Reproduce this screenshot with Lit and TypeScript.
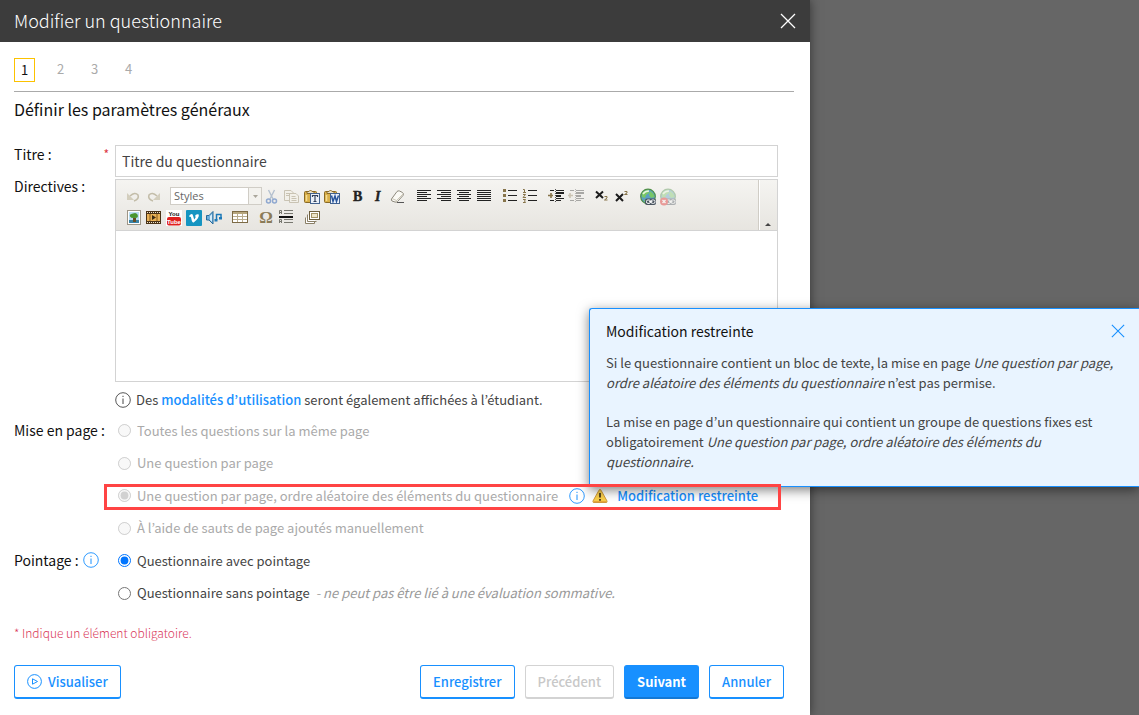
import { LitElement, html, svg, css, type TemplateResult } from "lit";
import { customElement, property, state } from "lit/decorators.js";

const lines = (rows: number[][], color = "#222") =>
  rows.map(([x, y, w, h = 1]) => svg`<rect x=${x} y=${y} width=${w} height=${h} fill=${color}></rect>`);

const globe = svg`
  <circle cx="8" cy="7.5" r="7.3" fill="#5c9fc4" stroke="#4f8f45" stroke-width="1.2"></circle>
  <path d="M2 4 Q5 0.5 8 1 L9 4 6 6 5 9 2 8Z M10 2 Q14 4 14.5 8 L11 9 9 6Z M4 11 L8 10 9 14 Q6 14 4 12Z" fill="#79c766"></path>
  <path d="M3 5 Q5 2 9 2" stroke="#e6f6df" stroke-width="1.4" fill="none"></path>`;

const chain = svg`
  <rect x="5" y="9.5" width="11" height="6.5" rx="2" fill="#4a5560"></rect>
  <rect x="6.5" y="11" width="4" height="3.4" rx="1.4" fill="none" stroke="#fff"></rect>
  <rect x="11" y="11" width="4" height="3.4" rx="1.4" fill="none" stroke="#fff"></rect>
  <path d="M9 12.7H12.5" stroke="#fff"></path>`;

const clipboard = svg`
  <rect x="0.5" y="2.5" width="12" height="11" rx="1" fill="#d9b04a" stroke="#8a6a25"></rect>
  <path d="M3 4.5V2.5H5Q6.500 -0.5 8 2.500H10V4.5Z" fill="#e8e0c8" stroke="#8a6a25"></path>
  <path d="M2.500 6V12" stroke="#f4dc94" stroke-width="1.500"></path>`;

const icons: Record<string, TemplateResult> = {
  undo: svg`<path d="M4 7Q9 2.500 12 6Q13.500 10 8 12" fill="none" stroke="#c3bda9" stroke-width="1.600"></path><path d="M1 4V11H8Z" fill="#d3cebd"></path>`,
  redo: svg`<path d="M11 7Q6 2.500 3 6Q1.500 10 7 12" fill="none" stroke="#c3bda9" stroke-width="1.600"></path><path d="M14 4V11H7Z" fill="#d3cebd"></path>`,
  cut: svg`<path d="M4.500 1L9 10M10.500 1L6 10" stroke="#b5c1cf" stroke-width="1.400"></path><circle cx="4.500" cy="12" r="2" fill="none" stroke="#8fa8d0" stroke-width="1.500"></circle><circle cx="10.500" cy="12" r="2" fill="none" stroke="#8fa8d0" stroke-width="1.500"></circle>`,
  copy: svg`<g fill="#f2f0e9" stroke="#c9c3b3"><path d="M0.500 1.500H7L9.500 4V11.500H0.500Z"></path><path d="M5.500 4.500H12L14.500 7V13.500H5.500Z"></path><path d="M2 4.500H6M2 6.500H5M7.500 7.500H11.500M7.500 9.500H12.500M7.500 11.500H12.500"></path></g>`,
  pasteText: svg`${clipboard}<rect x="6.500" y="4.500" width="9" height="10" fill="#eaf1fa" stroke="#42628f"></rect><path d="M8.500 8V6.500H13.500V8M11 6.500V12.500M9.500 12.500H12.500" fill="none" stroke="#34435c" stroke-width="1.200"></path>`,
  pasteWord: svg`${clipboard}<rect x="6.500" y="4.500" width="9" height="10" fill="#eaf1fa" stroke="#42628f"></rect><path d="M7.500 6.500L9 12.500L11 7L12.500 12.500L14.500 6.500" fill="none" stroke="#28559c" stroke-width="1.500"></path>`,
  bold: svg`<text class="serif" x="3" y="12">B</text>`,
  italic: svg`<text class="serif slanted" x="5" y="12">I</text>`,
  eraser: svg`<path d="M1.500 10L7 2.500Q8 1.500 9.500 2L12.500 3.500Q14 4.500 13 6.500L7.500 12.500Q6.500 13.500 5 13L2 12Q1 11 1.500 10Z" fill="#fbfaf5" stroke="#8d897d"></path><path d="M2 9.500L6.500 11.500L13 5M6.500 11.500V13" fill="none" stroke="#cbc6b6"></path><path d="M7 13.500H14" stroke="#555"></path>`,
  left: svg`${lines([[1, 1, 14], [1, 3, 10], [1, 5, 14], [1, 7, 10], [1, 9, 14], [1, 11, 10]])}`,
  right: svg`${lines([[1, 1, 14], [5, 3, 10], [1, 5, 14], [5, 7, 10], [1, 9, 14], [5, 11, 10]])}`,
  center: svg`${lines([[1, 1, 14], [3, 3, 10], [1, 5, 14], [3, 7, 10], [1, 9, 14], [3, 11, 10]])}`,
  justify: svg`${lines([[1, 1, 14], [1, 3, 14], [1, 5, 14], [1, 7, 14], [1, 9, 14], [1, 11, 14]])}`,
  bullets: svg`${lines([[1, 0, 3, 3], [1, 5, 3, 3], [1, 10, 3, 3]], "#87744a")}${lines([[6, 1, 9], [6, 6, 9], [6, 11, 9]])}`,
  numbers: svg`<path d="M1 0.500H2.500V3.500M1 3.500H4M1 5.500H3.500L1 8.500H4M1 10.500H3.500L2.500 12L3.500 13.500H1" fill="none" stroke="#87744a"></path>${lines([[6, 1, 9], [6, 6, 9], [6, 11, 9]])}`,
  indent: svg`${lines([[2, 1, 4], [8, 1, 8], [8, 3, 8, 2], [8, 6, 5, 2], [8, 9, 8], [2, 11, 4], [8, 11, 5]])}<path d="M7.500 0V14" stroke="#555" stroke-dasharray="1 1"></path><path d="M0 6.500H5M3 4V9" stroke="#87744a" stroke-width="1.600"></path>`,
  outdent: svg`<g opacity="0.35">${lines([[2, 1, 4], [8, 1, 8], [8, 3, 8, 2], [8, 6, 5, 2], [8, 9, 8], [2, 11, 4], [8, 11, 5]])}<path d="M7.500 0V14" stroke="#555" stroke-dasharray="1 1"></path><path d="M0 6.500H5M2 4V9" stroke="#87744a" stroke-width="1.600"></path></g>`,
  sub: svg`<path d="M2 2.500L9 9M9 2.500L2 9" stroke="#1c1c1c" stroke-width="2"></path><path d="M10.500 7.500H13V9L10.500 11H13.500" fill="none" stroke="#87744a"></path>`,
  sup: svg`<path d="M2 5L9 12M9 5L2 12" stroke="#1c1c1c" stroke-width="2"></path><path d="M10.500 2.500H13V4L10.500 5.500H13.500" fill="none" stroke="#87744a"></path>`,
  link: svg`${globe}${chain}`,
  unlink: svg`<g opacity="0.4">${globe}${chain}<circle cx="4" cy="12.500" r="4" fill="#e01f1f"></circle><path d="M2.500 11L5.500 14M5.500 11L2.500 14" stroke="#fff" stroke-width="1.300"></path></g>`,
  image: svg`<rect x="1.500" y="0.500" width="13" height="14" fill="#fff" stroke="#9d9686"></rect><rect x="3" y="2" width="10" height="8" fill="#b9ddf3"></rect><rect x="3" y="10" width="10" height="3" fill="#3b83a5"></rect><path d="M7 8V12H10V8Z" fill="#684d25"></path><path d="M4 6.500Q3 4 7 3.500Q10 2 11.500 4.500Q13 8 9 8Q5 8.500 4 6.500Z" fill="#4a9630"></path>`,
  video: svg`<rect x="0" y="1" width="15" height="13" fill="#4a3215"></rect><rect x="1" y="4" width="13" height="7" fill="#e8b155"></rect><path d="M1 2.500H14M1 12.500H14" stroke="#eee3cb" stroke-dasharray="1 1"></path><path d="M4 4V11M11 4V11" stroke="#8a5a1b"></path><path d="M6 5L10 7.500L6 10Z" fill="#3d2a12"></path>`,
  youtube: svg`<rect width="16" height="16" fill="#fff"></rect><rect x="1" y="7" width="14" height="8.500" rx="2" fill="#e02020"></rect><text class="tiny" x="8" y="6" text-anchor="middle">You</text><text class="tiny light" x="8" y="13.500" text-anchor="middle">Tube</text>`,
  vimeo: svg`<rect width="16" height="16" rx="1" fill="#1695c1"></rect><path d="M3 6Q6 2.500 7 5.500L8.200 9.500Q10.500 7 9 6Q10 3.500 12.800 4.500Q13.500 8 7.700 12.500Q6 13 5.300 8.500Q5 6 3.800 7Z" fill="#fff"></path>`,
  audio: svg`<path d="M0.500 5.500H3L7 1.500V14L3 10H0.500Z" fill="#6eaedb" stroke="#276a9a"></path><path d="M4 6V10L6 12V4Z" fill="#d5edfb"></path><path d="M10.500 10V4.500H15V8" fill="none" stroke="#1c79b8" stroke-width="1.500"></path><rect x="8.500" y="9" width="3" height="2.500" fill="#1c79b8"></rect><rect x="13" y="7" width="3" height="2.500" fill="#1c79b8"></rect>`,
  table: svg`<rect x="0.500" y="1.500" width="15" height="11" fill="#fff" stroke="#7d6b45"></rect><rect x="1" y="2" width="14" height="2" fill="#b7a67d"></rect><path d="M1 6.500H15M1 9.500H15M5.500 4V12M10.500 4V12" stroke="#b9ac8d"></path>`,
  omega: svg`<text class="omega" x="8" y="13" text-anchor="middle">Ω</text>`,
  rule: svg`${lines([[6, 0, 9], [6, 3, 9], [6, 9, 9], [6, 12, 9]], "#77776f")}${lines([[1, 6, 14, 2]], "#111")}<path d="M1.500 4V0.500H3.500V4M1.500 2.500H3.500M1.500 13V9.500H3.500V13M1.500 11.500H3.500" stroke="#77776f" fill="none"></path>`,
  frames: svg`<path d="M1.500 7.500V13.500H10.500V11M3.500 4.500V11.500H12.500" fill="#fff" stroke="#8a7f66"></path><rect x="5.500" y="1.500" width="10" height="8" fill="#fff" stroke="#6d5f3e"></rect><rect x="7.500" y="3.500" width="6" height="4" fill="#ece4c8" stroke="#a39264"></rect>`,
};

type Tool = [icon: string, label: string];
const history: Tool[] = [["undo", "Annuler la saisie"], ["redo", "Rétablir la saisie"]];
const firstRow: Tool[][] = [
  [["cut", "Couper"], ["copy", "Copier"], ["pasteText", "Coller comme texte"], ["pasteWord", "Coller depuis Word"]],
  [["bold", "Gras"], ["italic", "Italique"], ["eraser", "Supprimer la mise en forme"]],
  [["left", "Aligner à gauche"], ["right", "Aligner à droite"], ["center", "Centrer"], ["justify", "Justifier"]],
  [["bullets", "Liste à puces"], ["numbers", "Liste numérotée"]],
  [["indent", "Augmenter le retrait"], ["outdent", "Diminuer le retrait"]],
  [["sub", "Indice"], ["sup", "Exposant"]],
  [["link", "Lien"], ["unlink", "Supprimer le lien"]],
];
const secondRow: Tool[][] = [
  [["image", "Image"], ["video", "Vidéo"], ["youtube", "YouTube"], ["vimeo", "Vimeo"], ["audio", "Audio"]],
  [["table", "Tableau"]],
  [["omega", "Caractère spécial"], ["rule", "Ligne horizontale"]],
  [["frames", "Cadre"]],
];

const infoIcon = html`<svg width="16" height="16" viewBox="0 0 16 16" aria-hidden="true">
  <circle cx="8" cy="8" r="7.3" fill="none" stroke="currentColor" stroke-width="0.9"></circle>
  <path d="M8 6.500V12M8 3.800V5" stroke="currentColor"></path>
</svg>`;

@customElement("rich-editor")
export class RichEditor extends LitElement {
  @property() label = "";

  static styles = css`
    :host { display: block; border: 1px solid #d3d3d3; background: #fff; }
    .toolbar { display: flex; border-bottom: 1px solid #d3d3d3; background: linear-gradient(#f5f4f1, #e7e5e0); }
    .rows { flex: 1; padding: 7px 8px 2px; display: flex; flex-direction: column; gap: 1px; }
    .row { display: flex; flex-wrap: wrap; }
    .group { display: flex; margin-right: 6px; }
    button { padding: 2px; border: 0; background: none; display: flex; width: 20px; height: 20px; box-sizing: border-box; }
    svg { display: block; flex: none; overflow: visible; }
    .styles { display: flex; position: relative; width: 92px; height: 18px; }
    select {
      appearance: none; width: 100%; height: 18px; padding: 0 14px 0 3px; border: 1px solid #d0cdc6;
      border-radius: 0; background: #fff; color: #666; font: 11px/16px "Open Sans", sans-serif;
    }
    .arrow {
      position: absolute; right: 1px; top: 1px; bottom: 1px; width: 12px; display: grid; place-items: center;
      background: #f3f2ee; border-left: 1px solid #d0cdc6; pointer-events: none;
    }
    .collapse {
      display: flex; align-items: flex-end; justify-content: center; width: 19px; height: auto;
      padding: 0 0 4px; border-left: 1px solid #d0cdc6; box-shadow: inset 1px 0 #fff;
    }
    textarea { display: block; width: 100%; height: 150px; box-sizing: border-box; border: 0; padding: 8px; resize: none; outline: 0; }
    .serif { font: bold 14px "Liberation Serif", serif; fill: #222; stroke: #222; stroke-width: 0.4; }
    .slanted { font-style: italic; }
    .tiny { font: bold 6px "Liberation Sans", sans-serif; fill: #111; }
    .light { fill: #fff; }
    .omega { font: bold 17px "Liberation Serif", serif; fill: #8b7b57; }
  `;

  private group(tools: Tool[]) {
    return html`<div class="group">${tools.map(([icon, label]) => html`
      <button type="button" aria-label=${label}><svg width="16" height="16" viewBox="0 0 16 16" aria-hidden="true">${icons[icon]}</svg></button>`)}</div>`;
  }

  render() {
    return html`
      <div class="toolbar" role="toolbar">
        <div class="rows">
          <div class="row">
            ${this.group(history)}
            <div class="styles">
              <select aria-label="Styles"><option>Styles</option></select>
              <span class="arrow"><svg width="5" height="3" viewBox="0 0 5 3"><path d="M0 0H5L2.500 3Z" fill="#aaa69b"></path></svg></span>
            </div>
            ${firstRow.map((g) => this.group(g))}
          </div>
          <div class="row">${secondRow.map((g) => this.group(g))}</div>
        </div>
        <button class="collapse" type="button" aria-label="Réduire la barre d’outils">
          <svg width="6" height="3" viewBox="0 0 6 3"><path d="M0 3H6L3 0Z" fill="#444"></path></svg>
        </button>
      </div>
      <textarea aria-label=${this.label}></textarea>
    `;
  }
}

@customElement("app-root")
export class AppRoot extends LitElement {
  @state() private layout = 2;
  @state() private scoring = 0;

  static styles = css`
    :host {
      display: block; position: relative; min-height: 100vh; overflow: hidden; background: #666; color: #444;
      font: 13px/20px "Noto Sans CJK KR", "Noto Sans", sans-serif;
    }
    h1, h2, h3, p { margin: 0; font-weight: 400; }
    button, input { font: inherit; color: inherit; }
    svg { flex: none; display: block; }
    a { color: #1890ff; text-decoration: none; font-weight: 500; }
    .modal {
      box-sizing: border-box; width: 100%; max-width: 810px; min-height: 100vh; background: #fff;
      box-shadow: 0 0 10px rgba(0, 0, 0, 0.5);
    }
    .bar {
      display: flex; align-items: center; justify-content: space-between; height: 42px; padding: 0 14px;
      background: #3c3c3c; color: #fff;
    }
    h1 { font-size: 18px; line-height: 24px; font-weight: 300; padding-bottom: 2px; }
    .icon-button { display: flex; padding: 0; border: 0; background: none; }
    .content { padding: 16px 16px 0 14px; }
    .steps { display: flex; gap: 13px; padding-bottom: 9px; border-bottom: 1px solid #aaa; }
    .steps button {
      box-sizing: border-box; width: 21px; height: 24px; padding: 0 0 2px; border: 1px solid transparent; background: none;
      color: #aaa; line-height: 20px;
    }
    .steps .current { margin-right: 2px; padding: 0; border-color: #fcc200; color: #111; }
    h2 { margin: 5px 0 24px; font-size: 16px; line-height: 24px; color: #111; }
    .form { display: grid; grid-template-columns: 101px 1fr; padding-right: 16px; }
    .label { display: flex; color: #111; font-size: 14px; line-height: 18px; }
    .star { margin: 0 6px 0 auto; font-size: 12px; color: #dc3545; }
    .title { box-sizing: border-box; width: 100%; height: 32px; padding: 0 6px; border: 1px solid #d3d3d3; background: #fff; color: #444; font-size: 14px; }
    rich-editor { margin-top: 2px; }
    .note { display: flex; align-items: center; gap: 5px; margin: 8px 0 4px; }
    .options { display: flex; flex-direction: column; }
    .option { position: relative; display: flex; align-items: center; height: 33px; white-space: nowrap; }
    .option:nth-child(even) { height: 32px; }
    .option label { display: flex; align-items: center; gap: 6px; }
    .option input { width: 13px; height: 13px; margin: 0 0 0 3px; }
    .locked label { color: #aaa; }
    .label.row { align-items: center; gap: 4px; height: 32px; }
    .info { color: #1890ff; }
    .hint { margin-left: 6px; font-style: italic; color: #999; }
    .extras { display: flex; align-items: center; gap: 7px; margin-left: 11px; }
    .extras a { margin-left: 2px; }
    .framed::after {
      content: ""; position: absolute; z-index: 3; inset: 5px -3px 2px -11px; border: 3px solid #ff4444; pointer-events: none;
    }
    .required { margin-top: 14px; font-size: 12px; font-weight: 300; color: #d9385a; }
    .actions { display: flex; gap: 10px; padding: 22px 10px 16px 0; }
    .btn {
      display: flex; align-items: center; gap: 6px; height: 34px; padding: 0 12px; border: 1px solid #1890ff;
      border-bottom-width: 2px; border-radius: 3px; background: #fff; color: #1890ff; font-weight: 500;
    }
    .btn.first { margin-right: auto; }
    .btn:disabled { border-color: #d3d3d3; color: #c8c8c8; }
    .btn.primary { border-color: #1890ff #1890ff #1478d4; background: #1890ff; color: #fff; font-weight: 700; }
    .popover {
      position: absolute; z-index: 2; top: 308px; right: 0; box-sizing: border-box; width: 550px; max-width: 100%;
      padding: 12px 14px 14px 16px; border: 1px solid #1890ff; border-right: 0; border-radius: 3px 0 0 3px;
      background: #e9f4ff; box-shadow: 0 3px 12px rgba(0, 0, 0, 0.5);
    }
    .popover header { display: flex; align-items: center; justify-content: space-between; margin-bottom: 12px; }
    .popover h3 { font-size: 14px; line-height: 20px; color: #111; }
    .popover p + p { margin-top: 19px; }
  `;

  private cross(size: number) {
    return html`<svg width=${size} height=${size} viewBox="0 0 16 16" aria-hidden="true"><path d="M1 1L15 15M15 1L1 15" stroke="currentColor" stroke-width="1.300"></path></svg>`;
  }

  private layoutOptions = [
    "Toutes les questions sur la même page",
    "Une question par page",
    "Une question par page, ordre aléatoire des éléments du questionnaire",
    "À l’aide de sauts de page ajoutés manuellement",
  ];

  render() {
    return html`
      <main class="modal">
        <header class="bar">
          <h1>Modifier un questionnaire</h1>
          <button class="icon-button" aria-label="Fermer">${this.cross(16)}</button>
        </header>
        <div class="content">
          <nav class="steps">
            ${[1, 2, 3, 4].map((n) => html`<button class=${n === 1 ? "current" : ""}>${n}</button>`)}
          </nav>
          <h2>Définir les paramètres généraux</h2>
          <div class="form">
            <label class="label" for="title">Titre :<span class="star">*</span></label>
            <input id="title" class="title" type="text" value="Titre du questionnaire" />
            <span class="label">Directives :</span>
            <div>
              <rich-editor label="Directives"></rich-editor>
              <div class="note">${infoIcon}<span>Des <a href="#">modalités d’utilisation</a> seront également affichées à l’étudiant.</span></div>
            </div>
            <span class="label row">Mise en page :</span>
            <div class="options locked">
              ${this.layoutOptions.map((text, i) => html`
                <div class="option ${i === 2 ? "framed" : ""}">
                  <label><input type="radio" name="layout" disabled .checked=${this.layout === i} />${text}</label>
                  ${i === 2 ? html`<span class="extras">
                    <button class="icon-button info" aria-label="Information">${infoIcon}</button>
                    <svg width="16" height="16" viewBox="0 0 16 16" aria-hidden="true">
                      <path d="M8 1.500Q8.800 1.500 9.200 2.500L15 13Q15.500 14.500 14 14.500H2Q0.500 14.500 1 13L6.800 2.500Q7.200 1.500 8 1.500Z" fill="#fbd04b" stroke="#d09a3c"></path>
                      <path d="M2 13.500H14" stroke="#e9a83a"></path>
                      <path d="M8 5V9.500M8 11V12.800" stroke="#4a3a1c" stroke-width="1.800"></path>
                    </svg>
                    <a href="#">Modification restreinte</a>
                  </span>` : ""}
                </div>`)}
            </div>
            <span class="label row">Pointage :<button class="icon-button info" aria-label="Information">${infoIcon}</button></span>
            <div class="options">
              <div class="option"><label><input type="radio" name="scoring" .checked=${this.scoring === 0} @change=${() => (this.scoring = 0)} />Questionnaire avec pointage</label></div>
              <div class="option">
                <label><input type="radio" name="scoring" .checked=${this.scoring === 1} @change=${() => (this.scoring = 1)} />Questionnaire sans pointage</label>
                <span class="hint">- ne peut pas être lié à une évaluation sommative.</span>
              </div>
            </div>
          </div>
          <p class="required">* Indique un élément obligatoire.</p>
          <div class="actions">
            <button class="btn first">
              <svg width="15" height="15" viewBox="0 0 15 15" aria-hidden="true"><circle cx="7.500" cy="7.500" r="6.900" fill="none" stroke="currentColor"></circle><path d="M5.500 4.800L10.500 7.500L5.500 10.200Z" fill="none" stroke="currentColor"></path></svg>
              Visualiser
            </button>
            <button class="btn">Enregistrer</button>
            <button class="btn" disabled>Précédent</button>
            <button class="btn primary">Suivant</button>
            <button class="btn">Annuler</button>
          </div>
        </div>
      </main>
      <aside class="popover">
        <header>
          <h3>Modification restreinte</h3>
          <button class="icon-button info" aria-label="Fermer">${this.cross(14)}</button>
        </header>
        <p>Si le questionnaire contient un bloc de texte, la mise en page <em>Une question par page, ordre aléatoire des éléments du questionnaire</em> n’est pas permise.</p>
        <p>La mise en page d’un questionnaire qui contient un groupe de questions fixes est obligatoirement <em>Une question par page, ordre aléatoire des éléments du questionnaire.</em></p>
      </aside>
    `;
  }
}
